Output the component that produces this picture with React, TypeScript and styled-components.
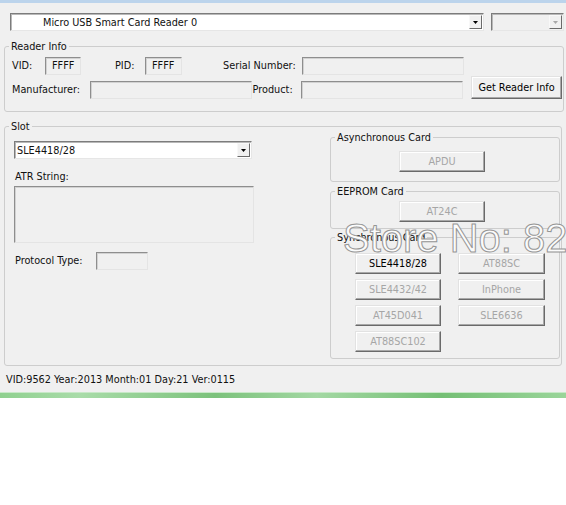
import React from 'react';
import styled, { createGlobalStyle } from 'styled-components';

const GlobalStyle = createGlobalStyle`
  html, body {
    margin: 0;
    padding: 0;
    background: #fff;
  }
  body {
    font-family: "DejaVu Sans Condensed", "DejaVu Sans", sans-serif;
  }
`

const Frame = styled.div`
  position: relative;
  width: 566px;
  background: #f0f0f0;
  border-top: 3px solid #bcd4ec;
  font-family: "DejaVu Sans Condensed", "DejaVu Sans", sans-serif;
  font-size: 10.8px;
  color: #111;
`

const Body = styled.div`
  padding: 10px 2px 0 4px;
`

const TopRow = styled.div`
  display: flex;
  gap: 7px;
  padding-left: 6px;
`

const Combo = styled.div<{ $w: number; $muted?: boolean; $indent?: number }>`
  box-sizing: border-box;
  width: ${p => p.$w}px;
  height: 18px;
  display: flex;
  align-items: center;
  padding-left: ${p => p.$indent ?? 2}px;
  padding-right: 1px;
  background: ${p => (p.$muted ? '#f0f0f0' : '#fff')};
  border: 1px solid;
  border-color: #7c7c7c #e6e6e6 #e6e6e6 #7c7c7c;
  box-shadow: inset 1px 1px 0 #b8b8b8;
  white-space: nowrap;
`

const ComboText = styled.span`
  flex: 1;
  overflow: hidden;
`

const DropBtn = styled.span<{ $muted?: boolean }>`
  box-sizing: border-box;
  width: 13px;
  height: 14px;
  display: flex;
  align-items: center;
  justify-content: center;
  background: #f0f0f0;
  border: 1px solid;
  border-color: #f8f8f8 #6a6a6a #6a6a6a #f8f8f8;
  color: ${p => (p.$muted ? '#a8a8a8' : '#000')};
`

const Group = styled.fieldset<{ $pt: number; $pb: number; $mt?: number; $mr?: number }>`
  margin: ${p => p.$mt ?? 0}px ${p => p.$mr ?? 0}px 0 0;
  padding: ${p => p.$pt}px 1px ${p => p.$pb}px 4px;
  border: 1px solid #cdcdcd;
  border-radius: 3px;
  min-width: 0;
`

const Legend = styled.legend`
  padding: 0 2px;
  margin: 0;
  line-height: 13px;
  font-size: 10.8px;
`

const Row = styled.div<{ $mt?: number; $h: number }>`
  display: flex;
  align-items: flex-end;
  height: ${p => p.$h}px;
  margin-top: ${p => p.$mt ?? 0}px;
  padding-left: 3px;
`

const Label = styled.span<{ $w: number; $ml?: number; $pl?: number }>`
  width: ${p => p.$w}px;
  margin-left: ${p => p.$ml ?? 0}px;
  padding-left: ${p => p.$pl ?? 0}px;
  box-sizing: border-box;
  line-height: 18px;
  white-space: nowrap;
`

const Field = styled.div<{ $w: number; $h?: number }>`
  box-sizing: border-box;
  width: ${p => p.$w}px;
  height: ${p => p.$h ?? 18}px;
  padding-left: 6px;
  line-height: 16px;
  background: #f0f0f0;
  border: 1px solid;
  border-color: #8e8e8e #e4e4e4 #e4e4e4 #8e8e8e;
  box-shadow: inset 1px 1px 0 #d2d2d2;
`

const Button = styled.button<{ $w: number; $h?: number; $off?: boolean; $ml?: number }>`
  box-sizing: border-box;
  width: ${p => p.$w}px;
  height: ${p => p.$h ?? 21}px;
  margin: 0 0 0 ${p => p.$ml ?? 0}px;
  padding: 0;
  font-family: inherit;
  font-size: 10.8px;
  color: ${p => (p.$off ? '#a6a6a6' : '#000')};
  background: #f0f0f0;
  border: 1px solid;
  border-color: #e2e2e2 #6a6a6a #6a6a6a #e2e2e2;
  box-shadow: inset -1px -1px 0 #a8a8a8, inset 1px 1px 0 #fff;
`

const SlotBody = styled.div`
  display: flex;
`

const LeftCol = styled.div`
  width: 240px;
  margin-left: 5px;
  padding-top: 8px;
`

const Caption = styled.div`
  margin-top: 11px;
  padding-left: 1px;
  line-height: 13px;
`

const AtrBox = styled(Field)`
  margin-top: 3px;
`

const ProtoRow = styled.div`
  display: flex;
  margin-top: 9px;
`

const RightCol = styled.div`
  width: 230px;
  margin-left: auto;
  margin-top: -2px;
`

const CardGrid = styled.div`
  display: grid;
  grid-template-columns: 86px 87px;
  grid-auto-rows: 21px;
  column-gap: 17px;
  row-gap: 5px;
  padding-left: 20px;
`

const Status = styled.div`
  padding: 7px 0 6px 6px;
  line-height: 13px;
`

const GreenBar = styled.div`
  height: 5px;
  background: linear-gradient(90deg, #8fd08f 0%, #a9dca9 14%, #7cc27c 38%, #a3d8a3 56%, #74bf74 78%, #9ad59a 100%);
  border-top: 1px solid #c8e8c8;
`

const Watermark = styled.div`
  position: absolute;
  left: 343px;
  top: 215px;
  font-family: "Liberation Sans", Arial, sans-serif;
  font-size: 40px;
  line-height: 40px;
  color: #fbfbfb;
  -webkit-text-stroke: 1px #959595;
  white-space: nowrap;
  pointer-events: none;
`

const Arrow = () => (
  <svg width="5" height="3" viewBox="0 0 5 3">
    <path d="M0 0h5L2.5 3z" fill="currentColor" />
  </svg>
)

const syncCards = [
  { name: 'SLE4418/28', off: false, w: 86 },
  { name: 'AT88SC', off: true, w: 87 },
  { name: 'SLE4432/42', off: true, w: 86 },
  { name: 'InPhone', off: true, w: 87 },
  { name: 'AT45D041', off: true, w: 86 },
  { name: 'SLE6636', off: true, w: 87 },
  { name: 'AT88SC102', off: true, w: 86 },
]

export default function App() {
  return (
    <>
      <GlobalStyle />
      <Frame>
        <Body>
          <TopRow>
            <Combo $w={474} $indent={32}>
              <ComboText>Micro USB Smart Card Reader 0</ComboText>
              <DropBtn><Arrow /></DropBtn>
            </Combo>
            <Combo $w={73} $muted>
              <ComboText />
              <DropBtn $muted><Arrow /></DropBtn>
            </Combo>
          </TopRow>

          <Group $pt={4} $pb={12} $mt={9}>
            <Legend>Reader Info</Legend>
            <Row $h={18}>
              <Label $w={33}>VID:</Label>
              <Field $w={36}>FFFF</Field>
              <Label $w={30} $ml={34}>PID:</Label>
              <Field $w={37}>FFFF</Field>
              <Label $w={79} $ml={41}>Serial Number:</Label>
              <Field $w={162} />
            </Row>
            <Row $h={23} $mt={1}>
              <Label $w={78}>Manufacturer:</Label>
              <Field $w={162} />
              <Label $w={50} $pl={1}>Product:</Label>
              <Field $w={162} />
              <Button $w={91} $h={23} $ml={8}>Get Reader Info</Button>
            </Row>
          </Group>

          <Group $pt={0} $pb={6} $mt={8} $mr={2}>
            <Legend>Slot</Legend>
            <SlotBody>
              <LeftCol>
                <Combo $w={238}>
                  <ComboText>SLE4418/28</ComboText>
                  <DropBtn><Arrow /></DropBtn>
                </Combo>
                <Caption>ATR String:</Caption>
                <AtrBox $w={240} $h={57} />
                <ProtoRow>
                  <Label $w={82} $pl={1}>Protocol Type:</Label>
                  <Field $w={52} />
                </ProtoRow>
              </LeftCol>

              <RightCol>
                <Group $pt={7} $pb={9}>
                  <Legend>Asynchronous Card</Legend>
                  <Button $w={86} $off $ml={64}>APDU</Button>
                </Group>
                <Group $pt={3} $pb={6} $mt={3}>
                  <Legend>EEPROM Card</Legend>
                  <Button $w={86} $off $ml={64}>AT24C</Button>
                </Group>
                <Group $pt={9} $pb={6} $mt={2}>
                  <Legend>Synchronous Card</Legend>
                  <CardGrid>
                    {syncCards.map(c => (
                      <Button key={c.name} $w={c.w} $off={c.off}>
                        {c.name}
                      </Button>
                    ))}
                  </CardGrid>
                </Group>
              </RightCol>
            </SlotBody>
          </Group>
        </Body>
        <Status>VID:9562 Year:2013 Month:01 Day:21 Ver:0115</Status>
        <GreenBar />
        <Watermark>Store No: 82</Watermark>
      </Frame>
    </>
  )
}
